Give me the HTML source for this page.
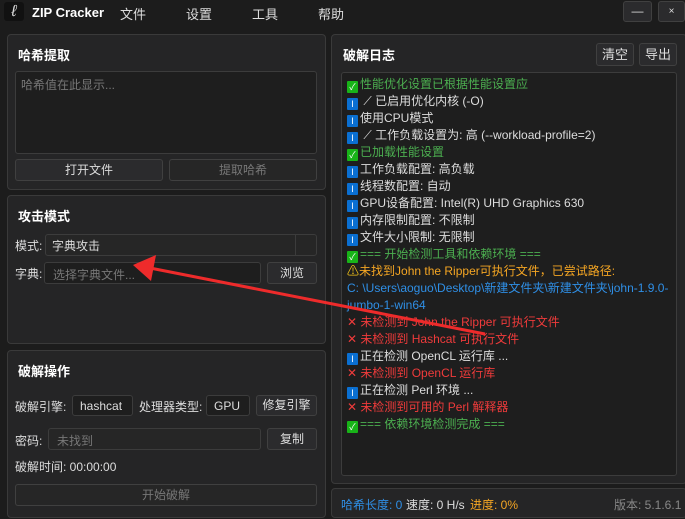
<!DOCTYPE html>
<html><head><meta charset="utf-8"><style>
*{margin:0;padding:0;box-sizing:border-box}
body{width:685px;height:519px;background:#1c1c1c;font-family:"Liberation Sans","Noto Sans CJK SC",sans-serif;font-size:12px;color:#ddd;position:relative;overflow:hidden}
.a{position:absolute}
.panel{position:absolute;background:#252526;border:1px solid #3a3a3a;border-radius:4px}
.ttl{position:absolute;font-weight:bold;font-size:13px;color:#fff}
.box{position:absolute;background:#1e1e1e;border:1px solid #3c3c3c;border-radius:3px}
.btn{position:absolute;background:#2b2b2d;border:1px solid #404040;border-radius:3px;text-align:center;color:#ddd;font-size:12px}
.ic{display:inline-block;width:11px;height:12px;vertical-align:-2px;margin-right:2px;border-radius:1px;text-align:center;font-size:9px;line-height:12px;color:#fff}
.i{background:#0a6fd1}.ok{background:#18b318}
.log div{height:17px;line-height:17px;white-space:nowrap}
.g{color:#4caf50}.r{color:#ef3b3b}.y{color:#f5a623}.b{color:#2f8fe6}
</style></head><body>
<div class="a" style="left:4px;top:2px;width:20px;height:19px;background:#111;border-radius:3px;color:#ddd;font-style:italic;font-size:16px;text-align:center;line-height:19px">ℓ</div>
<div class="a" style="left:32px;top:5px;font-weight:bold;font-size:13px;color:#fff">ZIP Cracker</div>
<div class="a" style="left:120px;top:4px;font-size:13px">文件</div>
<div class="a" style="left:186px;top:4px;font-size:13px">设置</div>
<div class="a" style="left:252px;top:4px;font-size:13px">工具</div>
<div class="a" style="left:318px;top:4px;font-size:13px">帮助</div>
<div class="btn" style="left:623px;top:1px;width:29px;height:21px;line-height:19px">—</div>
<div class="btn" style="left:658px;top:1px;width:27px;height:21px;line-height:19px;font-size:10px">×</div>

<div class="panel" style="left:7px;top:34px;width:319px;height:156px"></div>
<div class="ttl" style="left:18px;top:45px">哈希提取</div>
<div class="box" style="left:15px;top:71px;width:302px;height:83px;color:#777;padding:4px 5px">哈希值在此显示...</div>
<div class="btn" style="left:15px;top:159px;width:148px;height:22px;line-height:20px">打开文件</div>
<div class="btn" style="left:169px;top:159px;width:148px;height:22px;line-height:20px;color:#777;background:#262626">提取哈希</div>

<div class="panel" style="left:7px;top:195px;width:319px;height:149px"></div>
<div class="ttl" style="left:18px;top:206px">攻击模式</div>
<div class="a" style="left:15px;top:237px">模式:</div>
<div class="box" style="left:45px;top:234px;width:272px;height:22px;background:#262626;padding:2px 6px">字典攻击</div>
<div class="a" style="left:295px;top:235px;width:1px;height:20px;background:#3c3c3c"></div>
<div class="a" style="left:15px;top:265px">字典:</div>
<div class="box" style="left:44px;top:262px;width:217px;height:22px;padding:3px 8px;color:#777">选择字典文件...</div>
<div class="btn" style="left:267px;top:262px;width:50px;height:22px;line-height:20px">浏览</div>

<div class="panel" style="left:7px;top:350px;width:319px;height:168px"></div>
<div class="ttl" style="left:18px;top:361px">破解操作</div>
<div class="a" style="left:15px;top:398px">破解引擎:</div>
<div class="box" style="left:72px;top:395px;width:61px;height:21px;padding:3px 7px;color:#ddd">hashcat</div>
<div class="a" style="left:139px;top:398px">处理器类型:</div>
<div class="box" style="left:206px;top:395px;width:44px;height:21px;padding:3px 7px;color:#ddd">GPU</div>
<div class="btn" style="left:256px;top:395px;width:61px;height:21px;line-height:19px">修复引擎</div>
<div class="a" style="left:15px;top:432px">密码:</div>
<div class="box" style="left:48px;top:428px;width:213px;height:22px;padding:3px 8px;color:#777;background:#262626">未找到</div>
<div class="btn" style="left:267px;top:428px;width:50px;height:22px;line-height:20px">复制</div>
<div class="a" style="left:15px;top:458px">破解时间: 00:00:00</div>
<div class="btn" style="left:15px;top:484px;width:302px;height:22px;line-height:20px;color:#777;background:#262626">开始破解</div>

<div class="panel" style="left:331px;top:34px;width:356px;height:450px"></div>
<div class="ttl" style="left:343px;top:45px">破解日志</div>
<div class="btn" style="left:596px;top:43px;width:38px;height:23px;line-height:21px;font-size:13px">清空</div>
<div class="btn" style="left:639px;top:43px;width:38px;height:23px;line-height:21px;font-size:13px">导出</div>
<div class="box log" style="left:341px;top:72px;width:336px;height:404px;padding:3px 5px;background:#1e1e1e">
<div class="g"><span class="ic ok">✓</span>性能优化设置已根据性能设置应</div>
<div><span class="ic i">I</span> ⟋ 已启用优化内核 (-O)</div>
<div><span class="ic i">I</span>使用CPU模式</div>
<div><span class="ic i">I</span> ⟋ 工作负载设置为: 高 (--workload-profile=2)</div>
<div class="g"><span class="ic ok">✓</span>已加载性能设置</div>
<div><span class="ic i">I</span>工作负载配置: 高负载</div>
<div><span class="ic i">I</span>线程数配置: 自动</div>
<div><span class="ic i">I</span>GPU设备配置: Intel(R) UHD Graphics 630</div>
<div><span class="ic i">I</span>内存限制配置: 不限制</div>
<div><span class="ic i">I</span>文件大小限制: 无限制</div>
<div class="g"><span class="ic ok">✓</span>=== 开始检测工具和依赖环境 ===</div>
<div class="y"><span style="color:#f5c518">⚠</span>未找到John the Ripper可执行文件，已尝试路径:</div>
<div class="b">C: \Users\aoguo\Desktop\新建文件夹\新建文件夹\john-1.9.0-</div>
<div class="b">jumbo-1-win64</div>
<div class="r">✕ 未检测到 John the Ripper 可执行文件</div>
<div class="r">✕ 未检测到 Hashcat 可执行文件</div>
<div><span class="ic i">I</span>正在检测 OpenCL 运行库 ...</div>
<div class="r">✕ 未检测到 OpenCL 运行库</div>
<div><span class="ic i">I</span>正在检测 Perl 环境 ...</div>
<div class="r">✕ 未检测到可用的 Perl 解释器</div>
<div class="g"><span class="ic ok">✓</span>=== 依赖环境检测完成 ===</div>
</div>

<div class="panel" style="left:331px;top:488px;width:356px;height:30px"></div>
<div class="a b" style="left:341px;top:496px">哈希长度: 0</div>
<div class="a" style="left:406px;top:496px">速度: 0 H/s</div>
<div class="a y" style="left:470px;top:496px">进度: 0%</div>
<div class="a" style="left:614px;top:496px;color:#888">版本: 5.1.6.1</div>

<svg class="a" style="left:0;top:0" width="685" height="519"><line x1="150" y1="268" x2="485" y2="334" stroke="#ee2b2b" stroke-width="3"/><polygon points="133,265 156,255 151,281" fill="#ee2b2b"/></svg>
</body></html>
